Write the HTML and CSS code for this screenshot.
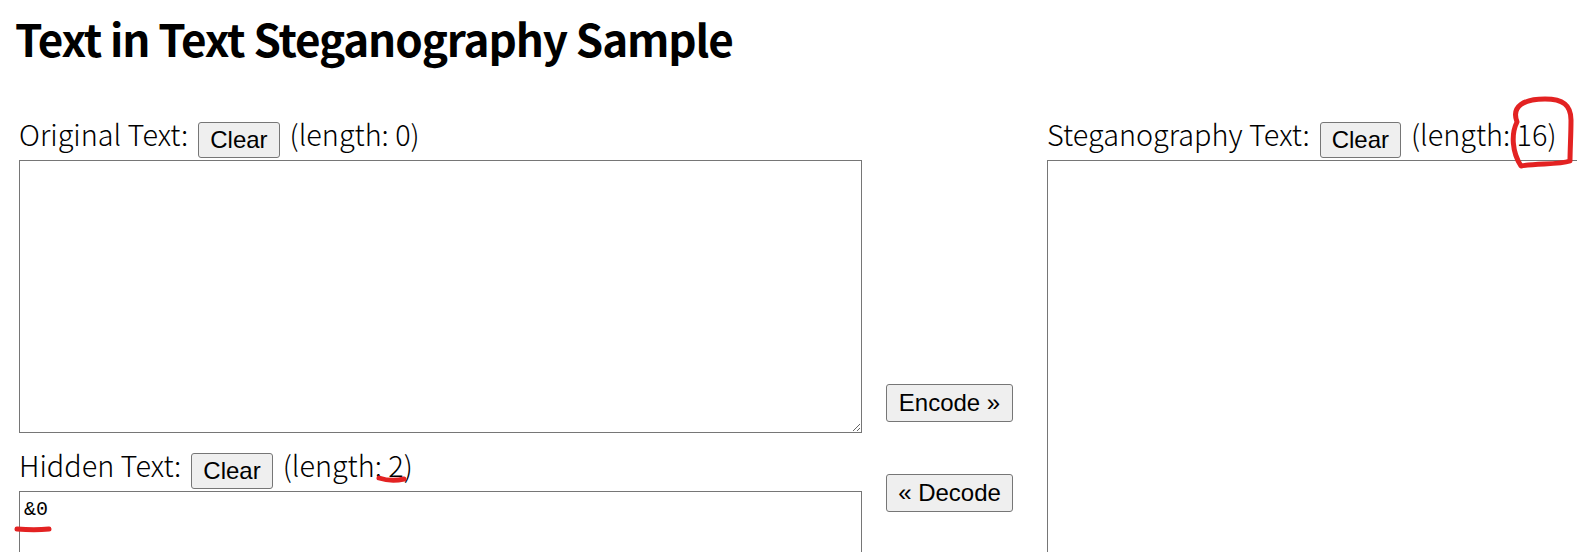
FILE: index.html
```html
<!DOCTYPE html>
<html lang="ja">
<head>
<meta charset="utf-8">
<title>Text in Text Steganography Sample</title>
<link rel="stylesheet" href="styles.css">
</head>
<body>
<h1 class="title">Text in Text Steganography Sample</h1>
<div class="main">
  <div class="col-left">
    <div class="label-row">
      <span class="label">Original Text:</span>
      <button class="btn">Clear</button>
      <span class="label">(length: 0)</span>
    </div>
    <textarea class="box box-original"></textarea>
    <div class="label-row label-row-hidden">
      <span class="label">Hidden Text:</span>
      <button class="btn">Clear</button>
      <span class="label">(length: 2)</span>
    </div>
    <textarea class="box box-hidden">&amp;0</textarea>
  </div>
  <div class="col-mid">
    <button class="btn btn-action btn-encode">Encode »</button>
    <button class="btn btn-action btn-decode">« Decode</button>
  </div>
  <div class="col-right">
    <div class="label-row">
      <span class="label">Steganography Text:</span>
      <button class="btn">Clear</button>
      <span class="label">(length: 16)</span>
    </div>
    <textarea class="box box-steg"></textarea>
  </div>
</div>
<svg class="marks" width="1577" height="552" viewBox="0 0 1577 552">
  <path d="M1517,122 C1511,106 1524,99 1545,99 C1563,99 1571,105 1571,120 C1571,135 1570,150 1570,161 C1558,165 1537,163 1521,166 C1512,152 1511,134 1517,122 Z" fill="none" stroke="#e32222" stroke-width="5" stroke-linejoin="round"/>
  <path d="M379,478 C388,481 396,481 404,479" fill="none" stroke="#e32222" stroke-width="5" stroke-linecap="round"/>
  <path d="M17,529 C28,530 40,530 49,529" fill="none" stroke="#e32222" stroke-width="5" stroke-linecap="round"/>
</svg>
</body>
</html>
```
FILE: styles.css
```css
html, body {
  margin: 0;
  padding: 0;
  background: #fff;
  overflow: hidden;
}
body {
  width: 1577px;
  height: 552px;
  position: relative;
  color: #000;
  font-family: "Noto Sans CJK JP", "Noto Sans", sans-serif;
}
.title {
  margin: 0;
  padding: 10px 0 0 15px;
  height: 108px;
  box-sizing: border-box;
  font-size: 44px;
  line-height: 56px;
  font-weight: 700;
  letter-spacing: -1.1px;
}
.main {
  display: flex;
  align-items: flex-start;
  padding-left: 19px;
  padding-top: 12px;
}
.col-left {
  width: 843px;
  display: flex;
  flex-direction: column;
}
.col-mid {
  width: 127px;
  margin-left: 24px;
  display: flex;
  flex-direction: column;
  padding-top: 264px;
  gap: 52px;
}
.col-right {
  margin-left: 34px;
  display: flex;
  flex-direction: column;
}
.label-row {
  display: flex;
  align-items: center;
  height: 40px;
  gap: 10px;
}
.label-row-hidden {
  margin-top: 18px;
}
.label {
  font-size: 28.8px;
  font-weight: 300;
  line-height: 40px;
  position: relative;
  top: -6px;
}
.btn {
  font-family: "Liberation Sans", Arial, sans-serif;
  font-size: 24px;
  line-height: 28px;
  padding: 3px 11px;
  margin: 0;
  border: 1px solid #767676;
  border-radius: 3px;
  background: #efefef;
  color: #000;
}
.btn-action {
  width: 127px;
  height: 38px;
  padding: 0;
  text-align: center;
}
.box {
  display: block;
  margin: 0;
  border: 1px solid #767676;
  background: #fff;
  box-sizing: border-box;
  font-family: "Liberation Mono", monospace;
  font-size: 20px;
  padding: 6px 4px;
  line-height: 24px;
  color: #000;
  outline: none;
}
.box-original {
  width: 843px;
  height: 273px;
}
.box-hidden {
  width: 843px;
  height: 200px;
}
.box-steg {
  width: 843px;
  height: 600px;
}
.marks {
  position: absolute;
  left: 0;
  top: 0;
  pointer-events: none;
}
```
